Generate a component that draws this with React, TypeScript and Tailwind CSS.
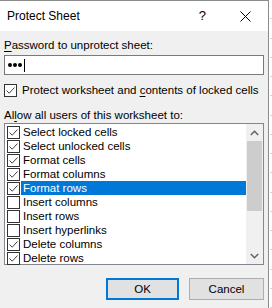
const rows: { label: string; checked: boolean; selected?: boolean }[] = [
  { label: 'Select locked cells', checked: true },
  { label: 'Select unlocked cells', checked: true },
  { label: 'Format cells', checked: true },
  { label: 'Format columns', checked: true },
  { label: 'Format rows', checked: true, selected: true },
  { label: 'Insert columns', checked: false },
  { label: 'Insert rows', checked: false },
  { label: 'Insert hyperlinks', checked: false },
  { label: 'Delete columns', checked: true },
  { label: 'Delete rows', checked: true },
];

function CheckBox({ checked }: { checked: boolean }) {
  return (
    <div className="flex h-[13px] w-[13px] shrink-0 items-center justify-center border border-[#333333] bg-white">
      {checked && (
        <svg width="11" height="11" viewBox="0 0 11 11" fill="none">
          <path d="M1.5 5.5 L4.2 8.2 L9.5 2.5" stroke="#444444" strokeWidth="1" />
        </svg>
      )}
    </div>
  );
}

export default function App() {
  return (
    <div
      className="relative h-[308px] w-[272px] overflow-hidden bg-white text-[11.5px] leading-[14px] text-[#000000]"
      style={{ fontFamily: '"Liberation Sans", Arial, sans-serif' }}
    >
      <div className="flex h-full w-[269px] flex-col border-r border-t border-[#8c8c8c]">
        {/* title bar */}
        <div className="flex h-[30px] shrink-0 items-center bg-white pl-[7px]">
          <span className="text-[12px]">Protect Sheet</span>
          <span className="ml-auto mr-[34px] text-[13px]">?</span>
          <svg width="11" height="11" viewBox="0 0 11 11" className="mr-[17px]">
            <path d="M0.5 0.5 L10.5 10.5 M10.5 0.5 L0.5 10.5" stroke="#000" strokeWidth="1" />
          </svg>
        </div>

        {/* body */}
        <div className="flex flex-1 flex-col bg-[#f0f0f0] pl-[4px] pr-[4px] pt-[7px]">
          <div className="h-[15px]">
            <span className="underline underline-offset-2">P</span>assword to unprotect sheet:
          </div>
          <div className="mt-[2px] flex h-[20px] items-center border border-[#7a7a7a] bg-white pl-[3px]">
            <div className="flex gap-[1px]">
              <div className="h-[4px] w-[4px] rounded-full bg-black" />
              <div className="h-[4px] w-[4px] rounded-full bg-black" />
              <div className="h-[4px] w-[4px] rounded-full bg-black" />
            </div>
            <div className="ml-[2px] h-[13px] w-px bg-black" />
          </div>

          <div className="mt-[8px] flex h-[14px] items-center gap-[5px]">
            <CheckBox checked />
            <span className="whitespace-nowrap">
              Protect worksheet and <span className="underline underline-offset-2">c</span>ontents of locked cells
            </span>
          </div>

          <div className="mt-[11px] h-[15px]">
            Al<span className="underline underline-offset-2">l</span>ow all users of this worksheet to:
          </div>

          <div className="flex h-[142px] border border-[#828790] bg-white">
            <div className="flex flex-1 flex-col pl-[2px] pt-px">
              {rows.map((r) => (
                <div key={r.label} className="flex h-[14px] items-center">
                  <CheckBox checked={r.checked} />
                  <span
                    className={
                      r.selected
                        ? 'ml-px flex h-[14px] flex-1 items-center bg-[#0078d7] pl-[2px] text-white'
                        : 'ml-px flex h-[14px] flex-1 items-center pl-[2px]'
                    }
                  >
                    {r.label}
                  </span>
                </div>
              ))}
            </div>
            <div className="flex w-[17px] flex-col bg-[#f0f0f0]">
              <div className="flex h-[17px] items-center justify-center">
                <svg width="9" height="6" viewBox="0 0 9 6" fill="none">
                  <path d="M0.8 5 L4.5 1.3 L8.2 5" stroke="#606060" strokeWidth="1.4" />
                </svg>
              </div>
              <div className="mx-[1px] h-[70px] bg-[#cdcdcd]" />
              <div className="mt-auto flex h-[17px] items-center justify-center">
                <svg width="9" height="6" viewBox="0 0 9 6" fill="none">
                  <path d="M0.8 1 L4.5 4.7 L8.2 1" stroke="#606060" strokeWidth="1.4" />
                </svg>
              </div>
            </div>
          </div>

          <div className="mt-[13px] flex justify-end gap-[10px]">
            <button className="flex h-[22px] w-[73px] items-center justify-center border-2 border-[#0078d7] bg-[#e1e1e1]">
              OK
            </button>
            <button className="flex h-[22px] w-[75px] items-center justify-center border border-[#adadad] bg-[#e1e1e1]">
              Cancel
            </button>
          </div>
        </div>
      </div>
      {/* spreadsheet grid lines peeking behind the dialog */}
      <div className="absolute right-0 top-0 flex h-full w-[2px] flex-col">
        {Array.from({ length: 16 }).map((_, i) => (
          <div key={i} className="h-[20px] border-b border-[#d4d4d4]" />
        ))}
      </div>
    </div>
  );
}
